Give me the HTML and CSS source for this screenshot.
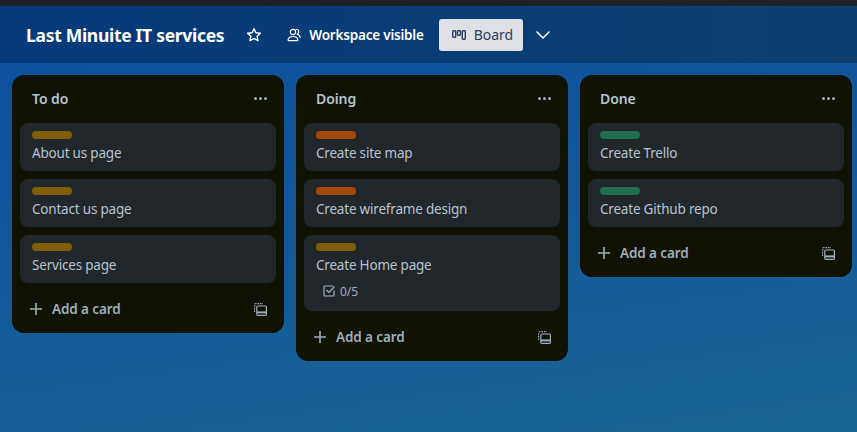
FILE: index.html

```html
<!DOCTYPE html>
<html lang="en">
<head>
    <meta charset="UTF-8">
    <title>Last Minuite IT services</title>
    <link rel="stylesheet" href="styles.css">
</head>
<body>
    <div class="topstrip"></div>
    <header class="board-bar">
        <h1 class="board-name">Last Minuite IT services</h1>
        <button class="bar-icon star-btn">
            <svg width="16" height="16" viewBox="0 0 16 16" fill="none" stroke="#fff" stroke-width="1.4" stroke-linejoin="round"><path d="M8 1.6l1.9 4.1 4.5.5-3.3 3 .9 4.5L8 11.5l-4 2.2.9-4.5-3.3-3 4.5-.5z"/></svg>
        </button>
        <div class="visibility">
            <svg width="14" height="14" viewBox="0 0 14 14" fill="none" stroke="#fff" stroke-width="1.200"><circle cx="6" cy="4" r="2.7"/><path d="M2 12.600h8c.7 0 1.100-.5.9-1.100-.5-1.700-2.300-3-4.900-3s-4.400 1.300-4.900 3c-.2.600.2 1.100.9 1.100z"/><path d="M8.800 1.500c1.700-.5 3 .8 3 2.300 0 1-.5 1.800-1.300 2.300 1.500.7 2.700 2 2.900 3.800"/></svg>
            <span>Workspace visible</span>
        </div>
        <button class="board-btn">
            <svg width="14" height="10" viewBox="0 0 14 10" fill="none" stroke="#2c3e5d" stroke-width="1.400"><rect x=".7" y=".7" width="3" height="6.600" rx=".7"/><rect x="5.500" y=".7" width="3" height="4.600" rx=".7"/><rect x="10.300" y=".7" width="3" height="8.600" rx=".7"/></svg>
            <span>Board</span>
        </button>
        <button class="bar-icon chevron-btn">
            <svg width="16" height="10" viewBox="0 0 16 10" fill="none" stroke="#fff" stroke-width="1.6" stroke-linecap="round" stroke-linejoin="round"><path d="M2 2l6 6 6-6"/></svg>
        </button>
    </header>

    <main class="board">
        <section class="list">
            <div class="list-head"><h2>To do</h2><span class="dots"><i></i><i></i><i></i></span></div>
            <div class="cards">
                <article class="card"><div class="label yellow"></div><p>About us page</p></article>
                <article class="card"><div class="label yellow"></div><p>Contact us page</p></article>
                <article class="card"><div class="label yellow"></div><p>Services page</p></article>
            </div>
            <div class="list-foot">
                <svg class="plus" width="12" height="12" viewBox="0 0 12 12" stroke="#9fadbc" stroke-width="1.600"><path d="M6 0v12M0 6h12"/></svg>
                <span class="add-text">Add a card</span>
                <svg class="template" width="13" height="13" viewBox="0 0 13 13" fill="none" stroke="#9fadbc" stroke-width="1.200"><path d="M.6 9V2C.6 1.100 1.100.6 2 .6h7" stroke-dasharray="1.600 1"/><rect x="2.800" y="3" width="9.600" height="9.400" rx="1.200"/><path d="M2.800 9.400h9.600" stroke-width="2"/></svg>
            </div>
        </section>

        <section class="list">
            <div class="list-head"><h2>Doing</h2><span class="dots"><i></i><i></i><i></i></span></div>
            <div class="cards">
                <article class="card"><div class="label orange"></div><p>Create site map</p></article>
                <article class="card"><div class="label orange"></div><p>Create wireframe design</p></article>
                <article class="card has-badges">
                    <div class="label yellow"></div>
                    <p>Create Home page</p>
                    <div class="badges">
                        <svg width="12" height="12" viewBox="0 0 12 12" fill="none" stroke="#9fadbc" stroke-width="1.200"><path d="M11 5.500V10c0 .6-.4 1-1 1H2c-.6 0-1-.4-1-1V2c0-.6.400-1 1-1h8"/><path d="M3.500 5l2.500 2.500L11.500 1.500"/></svg>
                        <span>0/5</span>
                    </div>
                </article>
            </div>
            <div class="list-foot">
                <svg class="plus" width="12" height="12" viewBox="0 0 12 12" stroke="#9fadbc" stroke-width="1.600"><path d="M6 0v12M0 6h12"/></svg>
                <span class="add-text">Add a card</span>
                <svg class="template" width="13" height="13" viewBox="0 0 13 13" fill="none" stroke="#9fadbc" stroke-width="1.200"><path d="M.6 9V2C.6 1.100 1.100.6 2 .6h7" stroke-dasharray="1.600 1"/><rect x="2.800" y="3" width="9.600" height="9.400" rx="1.200"/><path d="M2.800 9.400h9.600" stroke-width="2"/></svg>
            </div>
        </section>

        <section class="list">
            <div class="list-head"><h2>Done</h2><span class="dots"><i></i><i></i><i></i></span></div>
            <div class="cards">
                <article class="card"><div class="label green"></div><p>Create Trello</p></article>
                <article class="card"><div class="label green"></div><p>Create Github repo</p></article>
            </div>
            <div class="list-foot">
                <svg class="plus" width="12" height="12" viewBox="0 0 12 12" stroke="#9fadbc" stroke-width="1.600"><path d="M6 0v12M0 6h12"/></svg>
                <span class="add-text">Add a card</span>
                <svg class="template" width="13" height="13" viewBox="0 0 13 13" fill="none" stroke="#9fadbc" stroke-width="1.200"><path d="M.6 9V2C.6 1.100 1.100.6 2 .6h7" stroke-dasharray="1.600 1"/><rect x="2.800" y="3" width="9.600" height="9.400" rx="1.200"/><path d="M2.800 9.400h9.600" stroke-width="2"/></svg>
            </div>
        </section>
    </main>
</body>
</html>
```

FILE: styles.css

```css
* {
    box-sizing: border-box;
}
html, body {
    height: 100%;
}
body {
    margin: 0;
    overflow: hidden;
    font-family: "Noto Sans", "Open Sans", sans-serif;
    background: linear-gradient(172deg, #0b4e9c 0%, #12589a 50%, #1a6694 100%);
}
button {
    font-family: inherit;
    border: none;
    background: none;
    padding: 0;
}
.topstrip {
    height: 6px;
    background: #1d2125;
}
.board-bar {
    height: 57px;
    display: flex;
    align-items: center;
    padding-left: 26px;
    background: linear-gradient(90deg, #063a7a, #0c3f70);
    color: #fff;
}
.board-name {
    margin: 0;
    font-size: 17.5px;
    font-weight: 700;
    letter-spacing: -0.3px;
}
.bar-icon {
    display: flex;
    align-items: center;
}
.star-btn {
    margin-left: 22px;
}
.visibility {
    display: flex;
    align-items: center;
    gap: 8px;
    margin-left: 25px;
    font-size: 13.5px;
    font-weight: 600;
    letter-spacing: -0.2px;
}
.board-btn {
    display: flex;
    align-items: center;
    gap: 8px;
    width: 84px;
    height: 32px;
    margin-left: 15px;
    padding-left: 13px;
    border-radius: 3px;
    background: #dfe1e6;
    color: #2c3e5d;
    font-size: 14px;
}
.chevron-btn {
    margin-left: 12px;
}
.board {
    display: flex;
    align-items: flex-start;
    gap: 12px;
    padding: 12px;
}
.list {
    flex: none;
    width: 272px;
    border-radius: 12px;
    background: #101204;
    padding-bottom: 4px;
}
.list-head {
    height: 48px;
    display: flex;
    align-items: center;
    justify-content: space-between;
    padding: 0 17px 2px 20px;
}
.list-head h2 {
    margin: 0;
    font-size: 14px;
    font-weight: 600;
    letter-spacing: -0.1px;
    color: #b6c2cf;
}
.dots {
    display: flex;
    gap: 2px;
}
.dots i {
    width: 3px;
    height: 3px;
    border-radius: 50%;
    background: #9fadbc;
}
.cards {
    display: flex;
    flex-direction: column;
    gap: 8px;
    padding: 0 8px;
}
.card {
    border-radius: 8px;
    background: #22272b;
    padding: 8px 12px 0;
    min-height: 48px;
    box-shadow: 0 1px 1px #091e4240;
}
.has-badges {
    padding-bottom: 10px;
}
.label {
    width: 40px;
    height: 8px;
    border-radius: 4px;
}
.yellow {
    background: #7f5f01;
}
.orange {
    background: #a54800;
}
.green {
    background: #216e4e;
}
.card p {
    margin: 4px 0 0;
    font-size: 13.5px;
    line-height: 20px;
    letter-spacing: -0.2px;
    color: #b6c2cf;
}
.badges {
    display: flex;
    align-items: center;
    gap: 5px;
    height: 20px;
    margin: 6px 0 0 7px;
    font-size: 12px;
    color: #9fadbc;
}
.list-foot {
    display: flex;
    align-items: center;
    height: 46px;
    padding: 6px 17px 0 18px;
    color: #9fadbc;
    font-size: 13.5px;
    font-weight: 600;
    letter-spacing: -0.1px;
}
.add-text {
    margin-left: 10px;
}
.template {
    margin-left: auto;
}
```
